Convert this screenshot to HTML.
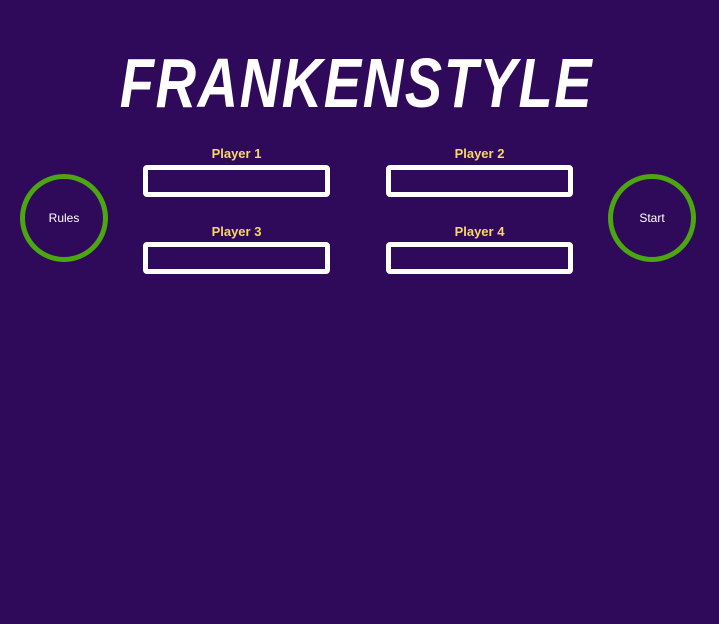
<!DOCTYPE html>
<html><head><style>
body{margin:0;width:719px;height:624px;background:#300a5a;position:relative;overflow:hidden;font-family:"Liberation Sans",sans-serif}
.t{position:absolute;left:-3px;top:43px;width:719px;text-align:center;color:#fff;font-weight:bold;font-style:italic;font-size:70px;letter-spacing:2px;line-height:80px;transform:scaleX(0.8);transform-origin:center;white-space:nowrap}
.lbl{position:absolute;width:187px;text-align:center;color:#f7d66a;font-weight:bold;font-size:13px}
.box{position:absolute;width:177px;height:22px;border:5px solid #fff;border-radius:4px}
.c{position:absolute;width:78px;height:78px;border:5px solid #4ca60f;border-radius:50%;color:#fff;font-size:12px;text-align:center;line-height:78px}
</style></head><body>
<div class="t">FRANKENSTYLE</div>
<div class="lbl" style="left:143px;top:146px">Player 1</div>
<div class="lbl" style="left:386px;top:146px">Player 2</div>
<div class="lbl" style="left:143px;top:224px">Player 3</div>
<div class="lbl" style="left:386px;top:224px">Player 4</div>
<div class="box" style="left:143px;top:165px"></div>
<div class="box" style="left:386px;top:165px"></div>
<div class="box" style="left:143px;top:242px"></div>
<div class="box" style="left:386px;top:242px"></div>
<div class="c" style="left:20px;top:174px">Rules</div>
<div class="c" style="left:608px;top:174px">Start</div>
</body></html>
